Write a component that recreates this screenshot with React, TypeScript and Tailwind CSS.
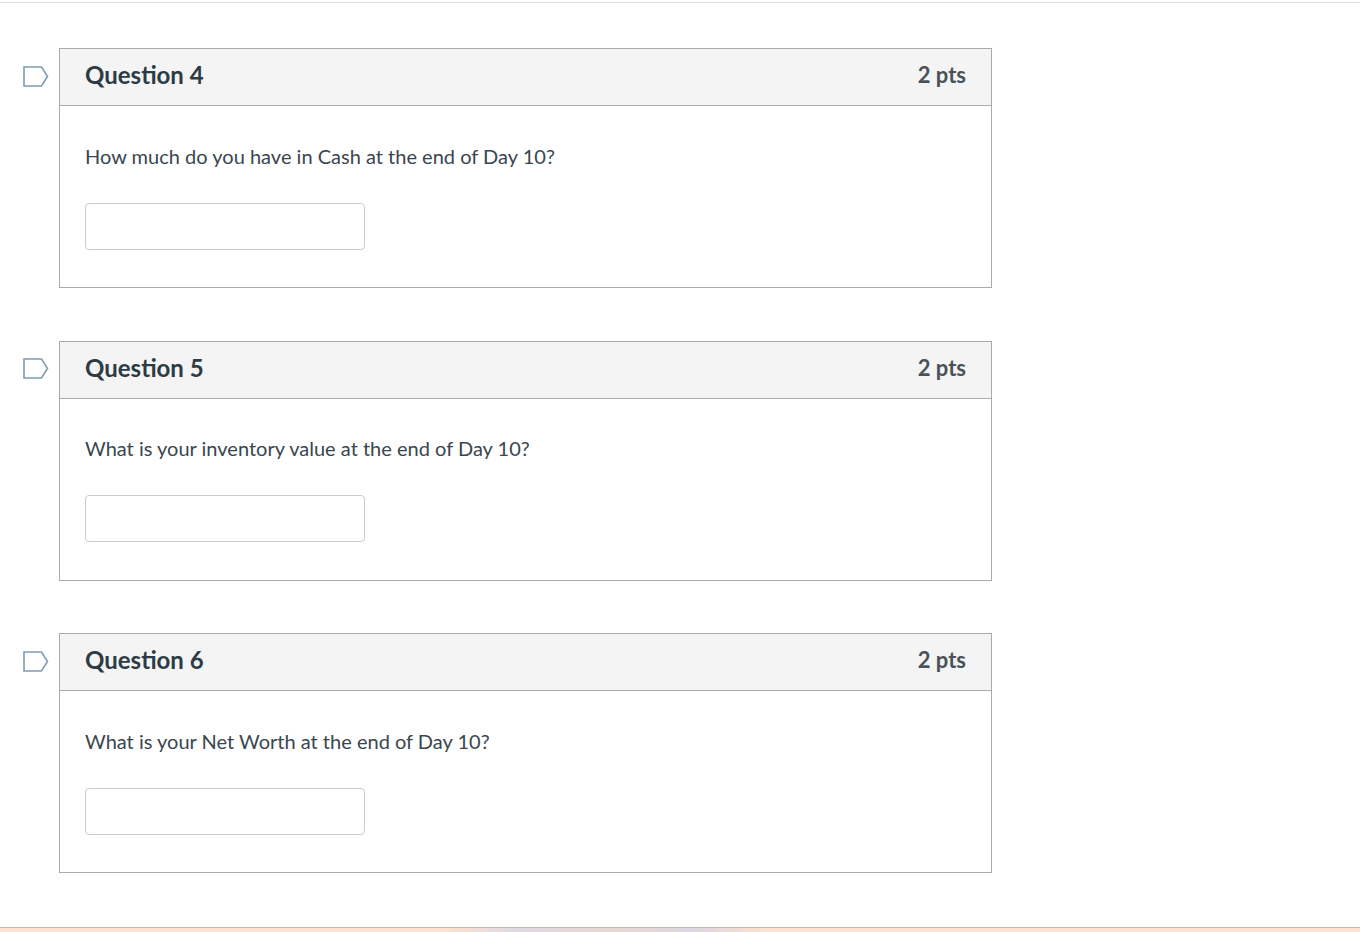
const questions = [
  { id: 4, text: 'How much do you have in Cash at the end of Day 10?' },
  { id: 5, text: 'What is your inventory value at the end of Day 10?' },
  { id: 6, text: 'What is your Net Worth at the end of Day 10?' },
];

function FlagIcon() {
  return (
    <svg width="26" height="21" viewBox="0 0 26 21" fill="none" className="shrink-0">
      <path d="M1 1H18.5L24.5 10.5L18.5 20H1Z" stroke="#7c9db5" strokeWidth="1.6" />
    </svg>
  );
}

function QuestionCard({ id, text }: { id: number; text: string }) {
  return (
    <div className="flex items-start">
      <div className="w-[59px] shrink-0 pl-[23px] pt-[17.6px]">
        <FlagIcon />
      </div>
      <div className="w-[933px] h-[240px] border border-[#aaaaaa] bg-white">
        <div className="h-[57px] flex items-center justify-between pl-[25px] pr-[25px] bg-[#f4f4f4] border-b border-[#aaaaaa]">
          <h2 className="text-[24px] font-bold text-[#2d3b45] pb-[4px]">Question {id}</h2>
          <div className="text-[22px] font-bold text-[#4a5259] pb-[5px]">2 pts</div>
        </div>
        <div className="pl-[25px] pt-[35.6px]">
          <p className="text-[20.03px] leading-[28px] text-[#3a464f]">{text}</p>
          <div className="mt-[33px] w-[280px] h-[47px] rounded-[4px] border border-[#c7cdd1] bg-white" />
        </div>
      </div>
    </div>
  );
}

export default function App() {
  return (
    <div className="h-[932px] overflow-hidden bg-white flex flex-col font-['Lato',sans-serif]">
      <div className="mt-[2px] h-px bg-[#dddddd]" />
      <div className="pt-[45px] flex flex-col gap-[52.5px]">
        {questions.map(q => (
          <QuestionCard key={q.id} id={q.id} text={q.text} />
        ))}
      </div>
      <div className="mt-auto h-[5px] border-t border-[#c4b8ac] bg-[linear-gradient(90deg,#fde0cd_0%,#fde0cd_33%,#e0d8e2_38%,#e8d8d0_45%,#ddd6e2_51%,#fde0cd_56%,#fde0cd_100%)]" />
    </div>
  );
}
